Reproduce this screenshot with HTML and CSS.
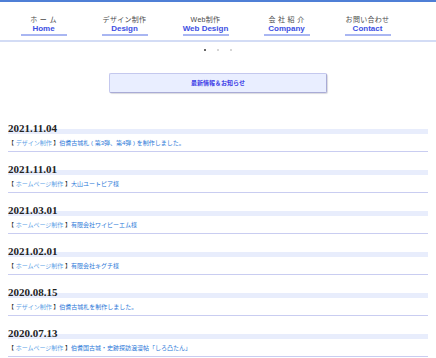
FILE: index.html
```html
<!DOCTYPE html>
<html lang="ja">
<head>
  <meta charset="UTF-8">
  <meta name="viewport" content="width=device-width, initial-scale=1.0">
  <title>最新情報＆お知らせ</title>
  <link rel="stylesheet" href="styles.css">
</head>
<body>

  <div class="top-bar"></div>

  <nav class="global-nav">
    <a class="nav-item" href="#"><span class="jp">ホ ー ム</span><span class="en">Home</span></a>
    <a class="nav-item" href="#"><span class="jp">デザイン制作</span><span class="en">Design</span></a>
    <a class="nav-item" href="#"><span class="jp">Web制作</span><span class="en">Web Design</span></a>
    <a class="nav-item" href="#"><span class="jp">会 社 紹 介</span><span class="en">Company</span></a>
    <a class="nav-item" href="#"><span class="jp">お問い合わせ</span><span class="en">Contact</span></a>
  </nav>

  <div class="slider-dots">
    <span class="dot active"></span>
    <span class="dot"></span>
    <span class="dot"></span>
  </div>

  <div class="page-title">最新情報＆お知らせ</div>

  <!-- お知らせ一覧 -->
  <div class="news-list">
    <dl class="news-item">
      <dt class="date">2021.11.04</dt>
      <dd>【 <a class="cat" href="#">デザイン制作</a> 】<a class="title" href="#">伯耆古城札 ( 第3弾、第4弾 ) を制作しました。</a></dd>
    </dl>
    <dl class="news-item">
      <dt class="date">2021.11.01</dt>
      <dd>【 <a class="cat" href="#">ホームページ制作</a> 】<a class="title" href="#">大山ユートピア様</a></dd>
    </dl>
    <dl class="news-item">
      <dt class="date">2021.03.01</dt>
      <dd>【 <a class="cat" href="#">ホームページ制作</a> 】<a class="title" href="#">有限会社ワイピーエム様</a></dd>
    </dl>
    <dl class="news-item">
      <dt class="date">2021.02.01</dt>
      <dd>【 <a class="cat" href="#">ホームページ制作</a> 】<a class="title" href="#">有限会社キグチ様</a></dd>
    </dl>
    <dl class="news-item">
      <dt class="date">2020.08.15</dt>
      <dd>【 <a class="cat" href="#">デザイン制作</a> 】<a class="title" href="#">伯耆古城札を制作しました。</a></dd>
    </dl>
    <dl class="news-item">
      <dt class="date">2020.07.13</dt>
      <dd>【 <a class="cat" href="#">ホームページ制作</a> 】<a class="title" href="#">伯耆国古城・史跡探訪浪漫帖「しろ凸たん」</a></dd>
    </dl>
  </div>

</body>
</html>
```

FILE: styles.css
```css
/* Global */
body {
  margin: 0;
  font-family: "Liberation Sans", "Noto Sans CJK JP", sans-serif;
  background: #fff;
  color: #333;
}

a {
  text-decoration: none;
}

.top-bar {
  height: 2px;
  background: #4f7fd6;
}

/* Navigation */
.global-nav {
  display: flex;
  padding: 13px 0 0 3px;
  height: 25px;
  border-bottom: 2px solid #d3dcf5;
}

.nav-item {
  width: 81px;
  display: flex;
  flex-direction: column;
  align-items: center;
}

.nav-item .jp {
  font-size: 7px;
  line-height: 9px;
  color: #4a4a4a;
  letter-spacing: 0.3px;
}

.nav-item .en {
  width: 46px;
  text-align: center;
  font-size: 8px;
  line-height: 9px;
  font-weight: bold;
  color: #3d4fe2;
  border-bottom: 2px solid #a9b6f2;
  padding-bottom: 1px;
}

/* Slider dots */
.slider-dots {
  display: flex;
  justify-content: center;
  gap: 11px;
  padding-top: 7px;
  height: 6px;
}

.dot {
  width: 2px;
  height: 2px;
  border-radius: 50%;
  background: #c8c8c8;
}

.dot.active {
  background: #333;
}

/* Title box */
.page-title {
  width: 216px;
  margin: 18px auto 0;
  height: 18px;
  line-height: 18px;
  text-align: center;
  font-size: 6px;
  font-weight: bold;
  color: #3a3ae6;
  background: #e9eeff;
  border: 1px solid #c4c8ee;
  border-right-color: #a9abd6;
  border-bottom-color: #a9abd6;
  border-radius: 2px;
  box-shadow: 1px 1px 1px rgba(0, 0, 40, 0.15);
}

/* News list */
.news-list {
  margin: 29px 8px 0;
}

.news-item {
  margin: 0 0 11px;
  border-bottom: 1px solid #c9cdf1;
}

.news-item .date {
  font-family: "Liberation Serif", serif;
  font-size: 11px;
  font-weight: bold;
  line-height: 12px;
  color: #222;
  background: linear-gradient(transparent 56%, #e8edfc 56%);
}

.news-item dd {
  margin: 0;
  padding: 4px 0 3px;
  font-size: 6px;
  line-height: 10px;
  color: #333;
}

.news-item .cat {
  color: #5d9fe6;
}

.news-item .title {
  color: #2b78d8;
}
```
